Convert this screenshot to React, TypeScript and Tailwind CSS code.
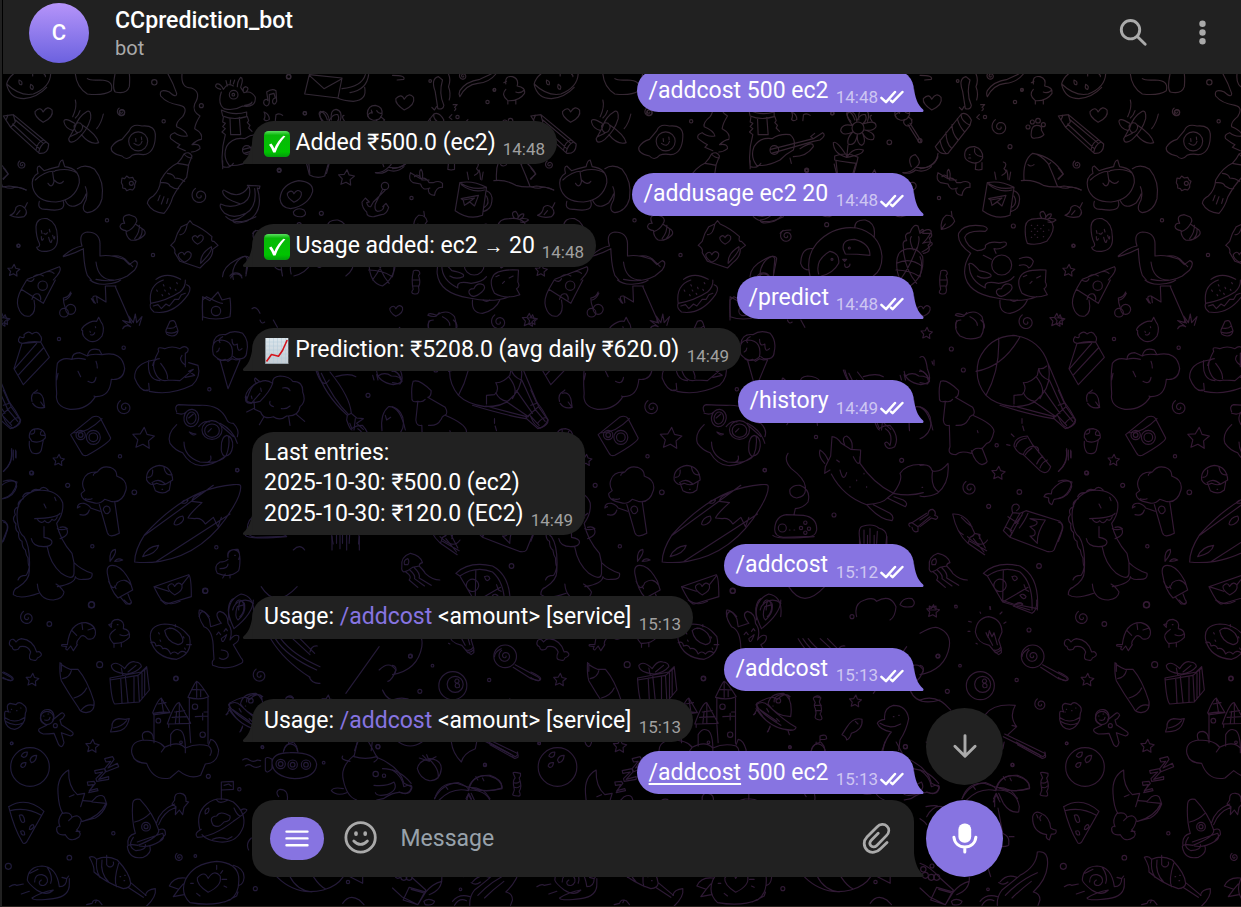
import type { ReactNode } from "react";

/* ---------- wallpaper doodles ---------- */

type Sheet = {
  x: number;
  y: number;
  paths: string[];
  dots?: [number, number, number][];
  stars?: [number, number, number][];
  spirals?: [number, number, number][];
  hearts?: [number, number, number][];
};

const sheets: Sheet[] = [
  {
    x: 0,
    y: 0,
    paths: [
      // watermelon, sleeping blob
      "M20 252Q24 235 40 222M20 252Q60 290 100 282Q150 262 152 222M20 254Q30 296 72 296Q112 292 140 262M57 240q12 4 8 14q-10 2 -8 -14M92 253q12 6 6 15q-10 0 -6 -15M98 222l0 6M132 222q6 6 4 8",
      "M226 222Q230 262 262 282Q310 288 334 272Q342 240 300 240Q270 242 262 236M345 222Q336 268 346 276Q380 284 388 260Q390 236 388 222",
      // pencil
      "M10 348L40 344L146 432Q146 462 118 460L32 382L10 348M10 348L24 346L18 360M40 344L46 366L32 382M46 360L130 430M38 372L118 446M130 420Q112 426 108 450M138 426Q120 434 116 458",
      // plane
      "M262 334Q274 330 272 356Q262 392 232 418Q208 436 206 416L224 384Q234 350 262 334M224 370Q190 350 192 366Q196 386 220 392M248 376Q290 404 296 428Q270 436 244 404M222 378q8-14 20-8q12 10 0 24q-16 12-20-16M226 300Q232 320 218 350M240 332Q236 346 226 354M310 342Q304 370 290 386M232 400l-22 10",
      // fried egg
      "M388 392Q396 370 426 378Q468 374 466 410Q464 460 430 464Q410 460 396 466Q380 484 366 468Q330 460 334 442Q344 424 366 418Q380 402 388 392M386 424a28 28 0 1 0 57 0a28 28 0 1 0 -57 0M407 416l1 8M424 411l1 8M402 430Q420 444 426 424",
      // steam squiggles
      "M504 222Q520 250 530 280Q530 296 508 276Q476 264 482 288Q500 310 540 316Q566 322 548 350Q526 368 530 380Q560 392 562 408Q540 412 524 398Q506 404 512 416Q530 430 540 434L532 442L556 452M546 222Q542 264 574 264Q606 276 584 312Q576 334 600 348Q586 370 584 386Q610 400 604 418Q590 420 576 434Q602 430 600 446Q588 456 574 456",
      // bottle
      "M552 462Q568 452 576 468L566 494L560 532Q534 560 518 592Q510 620 492 640Q456 638 442 610Q444 596 460 588Q480 570 482 540Q504 502 532 490Q546 476 552 462M552 462q10 12 24 12M532 490q14 2 34 6M502 520q20 2 22 14q16 0 30 10M484 548q22-2 26 10q14 10 26 8M480 586l-6 16M492 590l-8 22M504 596l-4 14",
      // llama with scarf
      "M662 268Q640 262 650 252Q662 250 670 268Q684 246 700 258M664 276Q652 310 672 326Q700 334 728 318Q768 324 766 292Q754 270 732 278L722 262Q732 234 722 232Q712 244 712 260M682 258l-4-16M690 254l2-14M700 252l4-12M688 284a13 13 0 1 0 26 0a13 13 0 1 0-26 0M696 284a4 4 0 1 0 8 0a4 4 0 1 0-8 0M664 330Q700 348 740 336L740 350Q700 362 668 348ZM690 354L692 404L722 404L718 352M670 352l-2 14l8 4l-8 10l8 6l-10 10l10 8q-14 50-8 96Q690 506 700 490M742 350l4 12l-4 6l8 8l-4 8l10 10M668 482v24M734 316q20-2 22-10M738 276q12-12 0-16q-10 2-8 12",
      // music notes
      "M800 318Q788 314 792 302Q800 294 804 302L800 276Q816 264 828 272L830 304Q824 318 818 308Q816 296 826 294L822 280L808 284L808 304Q808 316 800 318M792 336q6 10 0 22q6 8 16 0q0-16-16-22M826 362l2-18q10-6 20 2",
      // cat
      "M98 562Q92 532 114 520Q108 500 118 498L132 512Q150 506 176 500Q180 480 188 480L194 500Q240 506 238 548Q226 600 168 606Q110 606 98 562M232 506Q256 490 284 508Q314 544 306 596Q296 634 262 638Q240 632 258 600Q264 576 256 560M118 604Q110 630 140 628Q200 638 190 604M196 602Q210 632 244 608Q256 590 258 582M106 540q30-28 58-26M166 512q40-10 66 8M144 550Q156 568 162 544Q158 520 158 516M162 540Q180 558 190 544",
      // bee, acorn
      "M366 534l8 2l6-8l8 6l10-2l4 8l6 4l-4 10l0 8l-6 8l-8-2l-10 4l-4-6l-8-2l0-8l-4-8ZM388 550a6 6 0 1 0 12 0a6 6 0 1 0-12 0",
      "M360 680Q362 668 374 670Q364 650 378 646L388 644L404 650Q416 660 406 672L432 690Q440 700 430 708Q412 724 392 720Q378 710 378 692Q362 690 360 680M380 694Q396 690 406 672M404 716Q420 694 418 676M416 716q12-12 10-28",
      // bananas
      "M668 574Q670 566 678 574Q720 600 746 560L742 556L780 558L778 566L772 564Q794 636 740 664Q700 676 698 660Q720 658 738 640Q700 658 674 640Q656 622 662 612Q690 626 722 612Q668 596 668 574M748 562Q756 600 722 612M764 566Q772 620 738 640",
      // egg with heart, stone
      "M840 596Q844 552 896 542Q940 546 938 574Q926 616 872 626Q842 624 840 596M880 636Q890 620 912 630Q924 644 906 650Q880 652 880 636",
      // cake edge, leaf, ghost
      "M10 504L24 522L10 538M10 560Q34 568 44 562Q64 560 78 570M30 646Q46 640 48 622Q60 610 74 624L82 608M74 624Q86 638 72 650Q48 656 30 646M60 632L50 644",
      "M108 680Q110 652 142 656Q172 668 172 710Q176 750 140 754Q114 756 110 742Q122 740 118 730Q108 710 108 680M124 692l2 8M148 688l2 8M132 700q6 6 10-2M124 710q0 18 6 6M146 712q6 26 10 8M158 706q6 20 6 4",
      // pillow
      "M562 672L570 662L578 672Q610 686 636 710Q632 726 642 724L654 736L638 748Q640 770 616 788L600 804Q570 794 540 784L524 758Q528 746 512 736Q518 730 524 724Q530 700 544 680ZM562 672Q556 706 540 704M602 790Q600 760 634 740Q640 752 602 790",
      // goose
      "M190 768Q220 742 246 738M190 770Q224 760 250 746M246 738Q234 700 262 696Q298 696 300 730L300 768Q330 762 372 778L388 794L404 782Q420 786 404 810L382 828Q340 850 288 838M250 746Q252 800 262 826L274 840M288 786Q294 840 340 840M334 768Q366 764 382 784L398 800",
      // pizza tip, burger top
      "M82 838L178 800Q186 808 172 826L160 840M100 830q16-12 30-2M132 818q20-8 30 2M468 838Q500 814 542 838M700 838Q692 810 712 784Q738 758 742 778L738 820M692 834a18 18 0 0 1 34 0",
      "M758 700Q760 690 790 690",
    ],
    dots: [
      [463, 247, 8], [604, 317, 6], [491, 364, 5], [866, 230, 7], [914, 340, 5],
      [321, 661, 5], [56, 737, 4], [459, 765, 5], [838, 512, 5],
    ],
    stars: [[41, 812, 19]],
    spirals: [[365, 336, 14], [66, 494, 13], [600, 587, 26]],
    hearts: [[132, 344, 27], [594, 718, 17], [555, 770, 20], [884, 588, 22]],
  },
  {
    x: 250,
    y: 70,
    paths: [
      // envelope, hat brim
      "M178 14L164 72L264 84L276 24ZM178 16L222 56L276 26M346 14Q336 50 276 56M356 14Q350 60 300 68M344 52Q352 90 310 94Q280 92 262 84",
      // blossoms and pot
      "M220 154Q200 130 212 124Q226 128 232 150M244 150Q240 120 258 118Q280 122 270 154M284 154q-12-16-2-18M170 282L178 314Q200 328 224 318L234 284",
      // lollipop
      "M352 130Q354 106 376 106Q400 110 396 134Q388 154 368 150Q352 146 352 130M364 120l2 10M380 122q6 10 14 8M392 140l12 10",
      // anchor
      "M394 348a11 11 0 1 0 22 0a11 11 0 1 0-22 0M398 358L376 402Q372 420 382 424Q400 424 402 408L398 410L408 400L416 412Q410 434 394 434L372 440Q350 442 350 426Q336 414 336 396L346 384L358 396L350 398Q354 412 362 410L370 396L408 358M376 308Q400 314 414 300Q440 310 462 290",
    ],
    dots: [[165, 130, 5], [116, 20, 6], [87, 301, 5], [214, 430, 6], [733, 60, 4]],
    stars: [[289, 324, 25]],
  },
  {
    x: 0,
    y: 280,
    paths: [
      "M80 0L64 28L130 70L166 0M64 28Q48 58 54 80Q64 114 90 108Q110 98 102 60M96 58q4-20 20-16q8 8 6 18M80 0q16 10 22-4",
      "M212 36q-6 16-22 18q0 16 6 30M214 40q-8 18-20 20",
      "M270 0Q290 16 320 12Q350 10 362 0M316 18L318 66L288 48Q270 46 286 70M290 50l2 18M274 56l8 12M346 20L394 130M318 18h30M368 146q8-14 24-6l-24-18l22 6l-4-20l14 20l6-26l4 26l16-18l-8 26",
      "M452 70Q444 16 490 0M556 0Q558 20 540 36Q500 62 452 70M452 70Q446 84 462 96Q520 106 564 44Q578 20 560 14M460 78l14-4l10 12l14-14l10 6l16-20l12 0l8-14l12-4M470 30l2 4M490 14l2 4M510 22l2 4M486 44l2 3M506 40l2 3M526 28l2 3M530 8l2 3M494 30l2 3",
      "M608 110Q606 80 608 50L630 62L654 36L666 60L690 54Q694 86 690 110Q646 124 608 110",
      "M248 152Q240 150 252 138Q274 120 290 124L296 112L302 124Q316 140 306 168Q288 192 266 182Q244 170 248 152M270 154l1 3M286 140l1 3M272 164q8 4 12-6",
      "M498 150L510 124Q522 118 526 128L534 152Q532 168 516 168Q494 166 498 150M500 144q20 4 28-6M498 156q20 8 34-2",
      "M66 190Q48 186 60 170Q76 178 72 164Q86 150 96 162Q112 150 120 166Q128 174 122 186M66 190L42 266L70 314L148 232L122 186ZM44 266L110 190M56 284L130 204M68 190q26-8 54-4",
      "M172 250Q186 230 216 238Q216 218 240 218L262 228Q268 200 298 210L306 224Q368 212 374 266Q370 302 334 298Q330 352 286 350Q262 390 210 388Q164 380 170 340Q166 290 172 250M216 238q18-6 40 0M262 228q12-8 44-4M170 300l4-20M234 274l8 16M288 244q4 10 4 20M264 304Q284 316 288 292M286 350l-4-2",
      "M476 214Q470 200 486 204L494 206Q516 196 540 206Q554 194 564 206Q566 216 556 220L556 260M476 214Q456 250 462 268Q474 310 506 300M462 240Q402 250 404 294Q420 336 444 332M446 242Q440 300 480 302M446 310L448 330L438 330M448 334Q510 348 576 316Q604 290 594 256L566 248M546 226Q534 240 556 256M482 250Q506 280 502 296M506 300L540 302L580 268L566 274L584 286L556 292M478 236q-16 0-20 20",
      "M640 224Q630 180 664 180Q704 184 696 230Q670 256 640 224M640 192Q644 160 676 164Q700 148 728 160Q748 182 740 216Q740 240 708 236L700 230M660 240L684 326L720 240M652 236l10 6l14-4l8 6l12-8l12 4l12-2M668 170q-16 8-8 18M696 178q0 24 16 14q0 28 14 14M650 216q8-4 8-12",
      "M96 364Q90 342 108 334L112 330M98 370Q110 388 134 382L130 356Q124 334 104 340M122 366l10 14",
      "M10 330L28 370L10 376M10 410Q20 438 38 444Q62 436 62 420Q46 388 28 366M30 430q16-20 28-16",
      "M212 464L276 412Q294 404 302 416L332 474Q332 486 262 526Q250 530 244 518L212 464M222 458q40 2 84-42",
      "M88 472Q86 446 114 446Q138 450 136 474Q120 492 96 484ZM88 484Q86 506 96 518Q118 526 124 510L130 480M104 448q2 16-12 14M124 454q-10 14 10 12",
      "M530 396Q522 378 536 374Q566 376 598 376Q660 372 680 418Q684 430 700 430Q720 450 712 470M530 400q20 6 28-4M552 412a22 26 10 1 0 44 4a22 26 10 1 0-44-4M560 412a14 18 10 1 0 28 4a14 18 10 1 0-28-4M606 450a30 28 0 1 0 60 0a30 28 0 1 0-60 0M614 452a22 20 0 1 0 44 0a22 20 0 1 0-44 0M596 440q16-20 32-14M660 430Q700 450 712 490M664 438Q690 460 700 470M530 434Q500 462 510 490Q524 510 548 518Q590 590 678 528Q690 500 686 470M552 486Q552 530 600 546Q660 552 678 528M568 456q12 6 20 6q-10 8-20-6M624 546q12-4 8-18M664 500Q664 470 680 466Q700 470 698 500Q694 530 672 528Q662 520 664 500M566 414l14-12M624 456l10-10",
      "M254 632Q244 616 250 600Q258 574 292 576Q306 556 330 562Q352 570 350 588Q384 600 378 630Q366 672 332 664L314 658Q300 674 280 668Q240 660 244 640L254 632M256 656q12 4 20 0M292 576q-12 4-12 10M298 674L322 758Q328 776 358 760L344 664M310 690q0-10 10-12q12 2 10 16q-6 10-14 6ZM300 694l-28-10Q268 676 252 670Q232 668 232 684Q238 680 240 680M240 704Q262 710 268 690",
      "M440 600Q436 564 478 556Q516 560 518 600L508 606M440 600Q450 620 470 610Q490 620 508 606M458 610L466 632Q490 646 508 630L512 606M458 570Q460 592 444 592M492 562Q496 588 516 584M456 608q20-16 40 4M486 628h2",
      // surfboard
      "M722 618Q722 612 700 614Q560 624 434 764Q404 810 404 846Q440 850 480 844Q620 820 700 680Q724 640 722 618M434 766L640 616M470 844L690 702M604 640Q576 650 576 664L606 668Q570 700 564 714L584 716Q604 712 616 732L640 712L654 740L664 712M544 668q8-10 20-8q-4 14-20 8M522 732q4-20 26-24q8 14-10 24q-12 6-16 0M428 830Q440 800 476 796Q470 820 428 830",
      // dinosaur
      "M52 720Q44 654 104 632Q170 624 188 668Q192 700 170 730Q180 780 216 820L222 848Q244 870 276 880Q280 900 250 898Q230 900 226 890Q226 910 172 920M88 870Q92 800 72 770Q56 760 52 720M88 870Q90 900 54 922Q40 926 40 944Q60 960 116 940M112 912Q116 960 160 960Q190 956 192 936Q180 918 168 912M104 716Q170 714 180 700M112 718q12 16 22 4q12 14 22-4q10 8 16-8M132 740L132 772Q156 776 156 786Q156 800 130 800Q98 800 94 776M142 802Q150 850 184 880Q220 904 222 880L222 848M172 746Q184 752 200 746Q210 766 180 776M132 672l6 12M164 652l4 10M70 656q-20 8-14 24q-18 6-10 24q-12 14 2 28q-4 18 8 26q-2 20 10 26q0 20 10 26q2 16 8 24q0 22 4 26q-4 20-10 26q-20 0-24 14M68 650q6-14 24-12q8-14 26-8q12-16 26 0M202 746q-8-8-22-4",
      "M10 604Q50 592 50 620Q42 650 10 656M10 726Q28 730 22 750Q16 770 10 784",
      "M322 880Q318 850 348 858Q370 866 390 904L398 930L354 954Q330 930 322 880M326 904Q340 940 352 908Q376 890 394 916M362 952L378 972Q402 972 390 958L384 942M344 918l4 8M330 842Q328 810 346 808Q350 820 330 844M344 844Q352 832 368 840Q360 844 344 844",
      "M462 920L566 884Q574 890 574 950L500 972Q488 974 462 920M462 920L506 934M568 886L546 914",
      "M684 832Q678 806 714 808M714 808Q720 820 720 836Q720 860 716 872Q690 896 652 880Q640 858 660 846Q676 846 684 838M684 832a18 18 0 1 1 32 6M676 882l-8 12M690 884v10M660 866q24 0 24-14M704 826h2",
      "M40 510v30M48 514v20M10 574Q40 548 34 510M698 990a38 38 0 0 1 62-20M716 990q0-26 8-28q10 8 8 28M756 86Q770 76 780 100M740 360q16-50 30-50l10-6M740 350q-10 20 14 20l26-30",
    ],
    dots: [
      [128, 17, 14], [192, 98, 13], [212, 88, 15], [648, 93, 14], [177, 177, 5], [371, 203, 5], [628, 328, 5],
      [242, 465, 14], [242, 465, 7], [280, 472, 21], [280, 472, 13], [360, 529, 5], [95, 579, 6], [203, 616, 6],
      [403, 637, 7], [712, 571, 5], [277, 799, 5], [649, 802, 5], [616, 933, 7], [275, 974, 9],
    ],
    stars: [[14, 120, 16], [430, 476, 34], [176, 541, 18]],
    spirals: [[374, 382, 24]],
    hearts: [[526, 926, 22]],
  },
  {
    x: 0,
    y: 600,
    paths: [
      "M48 126Q40 112 30 122Q24 136 36 140Q38 154 54 148L60 140Q84 136 92 156Q82 180 98 180Q110 184 112 174Q126 168 124 162Q120 152 110 156Q100 120 64 116Q54 118 48 126",
      "M202 134Q210 66 258 68Q290 76 286 104Q280 122 262 116Q248 100 240 112Q230 122 230 132M202 134Q180 132 186 138L200 140Q194 148 202 150L212 138L220 152L232 134M216 92l14 14M246 72l2 16M282 84l-18 6",
      "M334 82Q330 58 354 58Q376 64 370 86Q392 90 388 112Q370 132 340 130Q320 110 336 96L346 88M334 82L326 74L336 70M342 132v10M364 130v10M388 100Q376 112 360 104M352 74h2",
      "M452 120Q444 76 494 72Q540 72 568 110Q580 160 530 178Q466 174 452 120M494 92Q512 74 540 100Q560 130 534 134Q500 126 494 92M452 128q14-6 16 10q16-6 20 8q16-4 24 16q10-12 22 0q10-14 24-4M560 134h14M526 80v-6M476 98l2 4M480 120l2 4M550 110l2 4M508 84l2 2M554 144l2 4",
      "M640 148Q640 90 612 80Q592 50 598 30Q612 28 628 56L632 80L664 70Q640 40 660 34Q684 40 684 70Q700 90 690 120Q704 100 716 108Q720 124 700 134L722 172Q734 184 724 190Q680 214 638 196Q634 184 642 178L640 148M650 104l6-8l6 8M672 94l6-8l4 6M664 116q4 22 16-12Z M664 150q24 0 20 20q-10 14-26 4M702 86Q680 40 686 20Q690 0 700 -4M702 86Q760 40 760 0M712 20q-10 30 2 40q24-20 20-46Z",
      "M180 188Q184 196 210 208L234 208Q262 240 282 304Q286 336 258 338Q240 336 236 324Q206 280 184 242Q178 220 180 188M188 236Q210 232 214 212M222 294Q250 286 260 264M244 330q16-20 38-14M184 190v24",
      "M380 222Q334 218 334 196Q348 180 374 206Q390 180 406 186Q424 188 424 200Q410 218 380 222M330 234L424 216L440 200L448 270L418 306L344 312Q334 300 330 234M330 240L414 226L440 204M362 234L366 310M376 230L384 308M402 230V306M414 226L418 304M426 220v76M434 210v74M364 204l4 20M408 196l-24 20",
      "M14 340Q14 330 26 336Q16 314 30 310L48 314Q56 302 70 314Q84 322 76 340L74 360Q64 384 44 388Q18 386 14 358ZM14 352Q44 374 74 352M16 364q28 18 54 4M34 328h1M50 332h1M62 324h1M30 336h1",
      "M122 352A20 20 0 1 1 158 360L180 342Q190 334 194 346Q190 356 180 360L184 374L214 394Q226 402 212 408L184 398L192 428Q186 448 176 434L162 400Q148 402 130 402Q110 394 118 386L140 376L132 370Q122 364 122 352M130 348h2M144 342h2M134 360q14 4 16-8",
      "M462 428V346L458 338Q474 298 484 294L510 338Q492 334 460 340M464 344L508 338M484 296L490 334M474 312l24-4M502 372Q524 308 538 308L572 370L502 372M524 336l30-4M538 310v60M516 352l46-2M530 334l-4 36M506 372v10M568 372L572 428M564 292Q586 244 590 244Q600 248 626 290Q600 302 564 292M568 296V370M624 294V430M590 246v46M576 268l36 2M602 270v20M608 340v20M586 350l38-2M612 336h12M512 438V404Q524 384 538 390Q554 394 556 440",
      "M430 420Q420 394 444 394Q460 398 460 416M430 420Q388 426 396 462Q404 490 440 490Q460 544 510 534L536 512Q570 540 602 526L616 492Q654 490 656 450Q648 420 632 418L626 434M430 420Q480 420 494 442L484 456M494 442Q534 420 556 444L556 458M556 444Q590 428 626 438Q640 450 630 466",
      "M332 394L336 382Q334 360 356 356L376 358L388 356L384 368Q376 392 350 394L332 396M340 384Q366 380 380 362",
      "M64 468q4-12 18-12q0 16-12 16ZM90 480q4-14 20-14q-2 20-16 22ZM62 498q2-12 16-10q-2 16-12 14Z",
      "M206 510Q170 530 174 580Q176 620 188 640M206 510Q204 560 232 584L254 580L248 600L242 620M208 590l14-6M186 640Q212 634 216 652Q236 640 244 660Q240 680 230 690Q248 700 236 712Q210 730 196 704Q168 708 170 684Q176 676 180 680Q170 660 186 640M216 652l-10 10M240 694h-12M250 602L276 604L290 590Q312 580 316 600L320 612Q310 640 286 654L246 664M248 664Q300 650 318 610L276 606",
      "M262 546L282 544L286 550L268 572L292 566L294 572L266 578L280 554L264 556ZM284 512L314 506L318 514L296 538L326 530L326 538L290 544L288 536L308 516L286 520ZM314 476L338 470L342 478L324 504L352 490L356 500L316 516L314 506L332 484L318 486Z",
      "M26 620Q80 588 132 634L80 726Q70 736 66 724Q44 690 26 620M30 632Q80 620 124 646M58 646q14-6 16 18q-10 12-16-18M90 680q10-12 12 0q-8 12-14 8ZM62 694q12-6 12 10q-10 4-12-10",
      "M398 610Q400 594 420 598Q460 640 476 690Q480 710 414 736M398 610Q394 660 406 700M404 666Q430 660 450 640M412 726L488 700Q496 716 480 724Q448 744 418 738M414 736Q384 730 382 740Q388 780 430 772Q456 760 450 740M406 700Q380 706 384 736M400 712Q380 740 408 752Q440 750 436 734M476 690Q498 680 496 704L480 722M470 668Q480 630 524 612M476 674Q490 636 528 622M524 600Q522 578 542 580Q560 582 558 604L566 606L552 622L548 644L538 630L526 644L528 620L516 612Z",
      "M600 690Q586 640 620 612Q656 584 700 606Q740 640 730 680Q712 730 660 726Q620 722 606 704M664 598V546L700 544V568L666 570M672 556l14-4l8 6M616 642q-4-14 10-18q4 14-10 18M640 676Q624 650 650 648Q660 630 690 648Q694 664 672 666Q656 686 640 676M604 688Q580 700 592 712Q640 710 700 664Q750 630 738 628Q728 624 722 632M702 624Q712 648 722 648M650 600q8 14 34 0M638 718q20-10 44 0l14-8",
      "M28 860Q44 850 50 856L70 852M64 882l24-8M82 840Q84 800 126 798Q170 800 178 860Q200 860 200 836L186 832M200 836L206 828M96 894Q124 876 160 870Q140 890 110 870Q84 850 82 840M96 894Q100 904 160 896Q210 890 208 850L208 836M104 846Q104 822 126 824Q146 830 142 846Q134 862 120 854Q114 846 124 840M142 802Q160 830 152 850M90 820l24-12",
      "M268 772Q280 766 290 778Q320 764 352 780Q390 820 392 850Q390 864 370 866Q320 850 282 816Q284 800 268 772M290 778Q286 810 300 832M306 780Q300 820 326 846M340 786a10 10 0 1 1-20 8M356 790Q340 840 350 860M320 766V794M392 848L438 886M384 862L430 892M436 886Q440 868 466 866Q470 890 440 918M360 830h2M372 842h2M374 826h2",
      "M260 914l16-4q4-14 20-8l10 12M290 900l-4 8",
      "M556 840Q580 790 650 784Q710 788 716 830Q720 880 690 900Q640 920 570 908Q540 880 556 840M700 796Q734 806 732 834Q730 852 718 856M556 834Q520 830 508 858L536 868M536 868L520 890L552 884M674 906L710 888L714 876M536 868l14-16M650 796v12M668 812l-6 8M680 838h-14M672 858l8 4M590 880l10 8M580 850h-8",
      "M812 116Q850 180 930 232M826 116Q860 170 950 210M842 116Q880 166 960 200M878 116L930 164M930 156q4-20 22-18M928 232Q936 252 960 250M900 116l44 44",
      "M688 310Q740 280 748 300Q770 274 788 290M688 310Q684 330 760 376M688 322L748 364M736 318h1M684 340l-6 4M728 378l-6 16M740 306q-2-14 14-20q30-10 32 12M862 290q12-6 18 4",
      "M816 490Q816 458 870 458Q946 456 950 494Q946 534 884 536Q820 530 816 490M850 456Q854 430 872 432Q890 434 894 456M866 432v-6M796 476Q800 468 816 478V506Q800 524 796 510ZM728 480q12-8 20 0q12 8 24 0l10 2M736 498q12-8 20 0q12 8 26 0M836 590Q824 574 840 568Q866 568 862 600",
      "M482 0Q510 20 540 4M372 0Q390 20 394 8M10 216q36 16 28 24q-10 6-28-8M746 750q-10-20 8-36",
    ],
    dots: [
      [274, 15, 9], [148, 72, 7], [299, 194, 9], [528, 235, 7], [35, 430, 4], [90, 501, 58], [438, 680, 13], [438, 680, 6],
      [141, 354, 20], [166, 377, 6], [475, 362, 7], [585, 320, 8], [608, 404, 8], [543, 427, 4], [625, 529, 6], [718, 568, 5],
      [340, 700, 5], [25, 799, 9], [208, 773, 7], [586, 768, 4], [766, 866, 6], [787, 441, 4], [842, 492, 14], [842, 492, 7],
      [878, 494, 14], [878, 494, 7], [918, 494, 14], [918, 494, 7],
    ],
    stars: [[97, 240, 20], [277, 439, 21]],
    spirals: [[82, 53, 22], [780, 226, 22], [538, 771, 13]],
    hearts: [[628, 846, 36]],
  },
  {
    x: 392.5,
    y: 0,
    paths: [
      // party popper
      "M124 342Q140 334 154 360L150 376L84 460Q60 466 46 440ZM124 342Q120 360 150 376M112 356Q118 380 134 396M96 374Q96 400 114 420M78 396Q78 430 94 444M60 420Q64 446 78 460M54 460Q50 500 0 506M138 230Q114 236 128 274Q132 300 136 326Q152 330 154 316Q138 280 150 240ZM168 222Q176 240 168 260Q176 280 170 300M202 290Q220 254 256 250Q290 248 310 222M202 272Q220 244 262 238L296 222M202 290q-4-10 0-18M182 314h12l-8 8q8 4 0 10M178 344l-8 8l8 6M118 322l8 8l6-10M0 226q40 0 34 12l-20 2",
      // duck, paw
      "M340 252Q336 226 360 230Q380 236 374 258Q400 262 396 280Q380 304 346 302Q324 284 340 268M334 248l8-4M346 304v8M370 302v10M396 270q-14 12-26 6",
      "M334 396Q336 376 350 376Q368 376 364 390L372 404Q364 414 346 414Q330 418 334 396",
      // lollipop, bow, mug
      "M134 466Q134 438 164 440Q190 448 188 474Q176 494 156 488Q134 482 134 466M164 446q-4 20 20 24M168 488L166 508L176 510L186 508V488M148 464h2M146 474h6",
      "M84 536Q78 512 86 508Q94 520 88 540M84 536L54 518Q46 540 62 548L84 552M84 536Q100 530 110 548L122 548Q140 540 150 550L150 562Q130 560 126 586Q104 584 108 566M84 552Q90 574 112 564M90 540l20 0M66 530q6-10 16 0",
      "M202 548Q240 540 282 562L270 646Q230 662 188 632ZM202 548Q240 572 282 562M206 554Q240 580 276 570M282 572Q302 580 298 604Q296 628 274 634M282 588Q294 610 276 622M206 596L258 586L246 618L232 606L216 616L212 600ZM212 600L246 594L222 612M224 516l4 22M250 486q14 4 2 20q14 10-6 20M260 510q4 12 4 28M272 516l-4 24",
      // cake slice
      "M312 540Q308 480 338 460Q360 462 384 490Q400 526 412 558M338 460Q400 470 430 522L414 536M304 542Q340 538 370 556Q400 564 432 558Q460 560 484 570M324 494q8 8 18 0M386 494l6-6",
      "M64 688Q60 660 78 646Q100 644 104 664Q92 686 64 688L76 672M94 634l2 14",
      // strawberry
      "M316 680Q318 656 350 656Q380 652 396 668Q408 690 380 724Q350 738 322 730Q314 710 316 680M366 656Q352 636 370 634Q380 646 376 654Q384 640 394 642Q394 652 384 656Q404 654 408 660Q396 670 384 666M334 676h1M352 676h1M370 676h1M334 694h1M352 694h1M370 694h1M386 690h1M334 712h1M352 712h1M370 710h1M344 686h1M362 686h1M344 704h1",
      // tumbling cat
      "M152 760Q110 730 116 700Q130 670 190 678Q210 684 196 694Q140 690 134 712Q140 740 172 752Q200 750 196 736Q210 722 240 728Q264 722 258 736Q240 750 222 746L228 760M152 760Q132 790 134 820Q140 880 230 894Q300 910 350 890M146 794Q150 780 178 812Q220 820 212 830Q190 840 172 828M148 794Q146 840 196 864M196 864Q190 840 236 850Q270 846 282 830M300 832Q310 806 378 810L376 846Q384 860 372 866L382 884Q340 900 306 880Q290 850 300 832M298 776Q330 764 340 784Q336 800 326 804Q320 790 298 796M310 830l10-4M350 834l12-6M330 850l6-6M244 866q10-20 28-12q10 10-4 22Q240 900 230 880q-4-14 14-14M190 766l24 12",
      "M62 818Q60 808 78 812Q86 820 78 826Q86 850 78 860Q84 884 66 882Q52 880 62 868Q56 840 62 818M62 840h20M60 858h20",
      "M0 694Q14 680 8 700L34 700Q38 710 28 714Q36 730 24 736Q36 756 10 760M0 770Q10 790 0 830",
    ],
    dots: [
      [195, 351, 5], [285, 306, 5], [306, 269, 4], [113, 243, 4], [0, 422, 6], [270, 440, 6], [280, 678, 6], [57, 594, 5],
      [460, 737, 5], [245, 795, 30], [324, 381, 6], [337, 366, 6], [354, 362, 7], [370, 374, 6],
    ],
    spirals: [[240, 381, 26], [212, 228, 12]],
    hearts: [[38, 306, 28]],
  },
  {
    x: 392.5,
    y: 300,
    paths: [
      "M110 62Q100 90 120 108Q150 124 182 110Q198 86 186 50Q164 24 132 46Q108 36 106 46Q120 52 132 48L140 38M150 50Q172 60 172 76",
      "M240 0Q236 40 270 40Q310 30 322 0M272 0q10 8 20 0",
      // balloon
      "M198 286Q160 240 176 180Q206 110 280 106Q360 116 384 190Q400 260 350 300Q330 320 278 320Q224 312 198 286M236 114Q240 210 198 286M300 110Q250 200 168 214M380 198Q370 208 356 206L352 226Q330 250 310 248Q322 270 306 284L282 286L282 312M356 206Q360 230 386 240M350 232Q380 270 360 296M310 278Q320 300 344 304M384 190L438 318M388 240L428 328M372 272L420 340M340 304L408 350M280 318L402 350M240 316Q330 344 400 356M400 354L438 320L466 360Q458 382 436 386ZM412 346L440 376M426 326L458 364",
      // tree
      "M62 244Q80 236 116 272Q116 290 106 292L158 322Q168 340 158 346Q220 372 222 394Q214 430 200 430L186 446Q160 440 154 460Q120 450 108 464Q80 464 90 440L88 376Q72 380 70 360L76 304Q56 310 58 290Q56 260 62 244M76 304q14 4 22-6M108 376q28 2 36-16M156 346q-8 4-10 12M172 392l2 6M154 452Q166 490 186 494Q206 488 200 480L186 444",
      "M0 172Q16 160 22 206Q36 240 22 252L0 248M0 210Q24 220 24 240M36 184l2 8M42 180l0 16M0 320a46 50 0 0 1 0 96",
      // flashlight
      "M282 438Q284 410 322 408L340 438Q316 442 310 464Q292 460 282 438M288 440Q292 418 320 414M310 464L360 512Q382 528 392 500L340 436M336 444Q320 456 316 464M360 504Q366 486 382 480M350 492Q354 480 368 468M338 440q20-4 18 18M306 356v14M308 378l4 14M274 402l8 8M260 434l10 2",
      "M440 446Q446 490 416 514M452 450v22",
      // fox tail, bone, squid
      "M0 496Q30 490 36 512Q60 520 84 490Q90 550 52 580Q20 594 0 588M38 512Q30 560 56 576M6 562h2M0 660L24 644Q24 628 38 628Q50 636 44 646Q60 650 48 658L34 654L0 680",
      "M98 642Q130 640 150 670L164 700Q160 710 150 712L144 730Q110 700 98 642M124 652Q140 670 156 680M114 690q6 10 16 14M144 730L194 764M150 724L200 752M164 700L180 704L178 716M176 706L196 744M160 716L192 756",
      // jellyfish
      "M28 800Q24 770 54 760Q84 766 90 788Q80 790 80 798L60 802Q48 812 34 816Q26 812 28 800M36 794q-4-14 10-18q6 8 0 18ZM40 816Q60 830 50 840L76 862M52 810Q70 826 66 836L96 858M66 804Q84 820 80 834L116 856M80 798Q96 814 98 820Q120 840 142 840",
      // chocolate
      "M318 632L420 664Q430 672 426 690L402 750Q396 758 380 754L270 712L310 636M318 632L300 640L270 692Q280 700 268 710L250 692L278 638L300 640M278 638Q270 612 290 612Q306 620 290 632M330 656L376 660Q350 700 352 730L330 708Q350 710 344 692L330 680Q356 676 350 664ZM324 640q-8 20-26 44M264 650l30 20M256 680l20 12M306 646l-20 24",
      "M456 546Q426 534 396 570L394 582Q376 578 372 590L386 594Q384 610 396 614L402 598Q446 594 456 546",
      // pizza half
      "M190 820Q230 782 300 798Q360 830 352 930M202 828Q250 796 300 816Q340 850 336 930M190 820L202 828L248 906L330 930M250 810L248 906L324 862M222 852a18 18 0 1 1 36 8a18 18 0 1 1-36-8M282 918q10-14 26-4M276 830q14-6 16 6q-10 14-16-6M300 886q10-8 18 4q-6 14-18-4M312 854l6 16l8 4",
      "M28 918q8 8 20 0v12H28ZM210 920l2 8M104 916h6",
    ],
    dots: [
      [94, 147, 6], [130, 210, 6], [230, 436, 5], [298, 576, 7], [206, 619, 6], [357, 798, 7], [499, 518, 5],
    ],
    stars: [[20, 100, 18], [409, 61, 21], [235, 520, 21]],
    spirals: [[320, 66, 25], [150, 564, 23]],
    hearts: [[12, 32, 20]],
  },
  {
    x: 392.5,
    y: 600,
    paths: [
      // bulb
      "M208 136Q172 130 166 96Q170 54 206 50Q244 56 246 96L236 120L244 146M208 136L226 158M222 150q12 4 20-8M226 156q8 4 18-8l0 10l-8 6ZM218 136L198 98L204 112L208 92L216 110L222 98L232 134M180 36l2 4M210 20v8M246 36l-6 6M146 64l8 2M258 66l-6 4M144 94h6M168 130l4 2",
      "M244 0L280 12L352 26M350 0Q352 30 336 40L280 18M288 12q10-8 20 0",
      "M368 194L438 232Q446 240 438 242L416 236L362 202M306 170q0-14 20-24M326 168",
      "M0 100Q40 76 56 84Q94 100 88 140Q76 210 0 224M0 196Q16 200 8 218",
      // umbrella
      "M0 300Q50 280 92 330M196 344Q220 310 286 316Q266 350 290 380L264 404M276 376l14 4M254 402L366 456Q380 460 376 472Q364 480 360 468M250 410L358 464",
      // palm
      "M126 596Q150 550 198 548Q230 560 228 572Q240 520 290 528Q330 540 328 564Q280 580 238 564M228 572Q180 560 140 600M232 570Q290 570 298 620L296 636Q270 640 250 610L236 580M228 584L220 606M228 584L240 606M224 590V620M234 624L248 700Q270 710 266 730Q270 740 246 740M268 710h14M250 530l6 10M270 534l4 8M160 560l6 8",
      "M362 520Q360 514 384 520Q386 528 380 534Q390 560 380 574Q388 590 376 588Q356 588 362 580Q368 570 364 560Q360 540 368 534ZM364 548q10 4 18-4M366 562q10 4 16-4",
      "M338 650Q342 632 360 638Q390 650 392 684Q400 690 408 690Q412 704 394 702L388 720Q376 716 380 704Q336 696 338 650M350 644l4 10M364 646q-8 6-2 16",
      "M18 620q30-6 38 0M0 510Q30 530 34 560Q60 550 58 564Q50 590 20 576M0 656q16 10 20 18M20 650Q40 614 66 620",
      // crocodile
      "M352 756Q388 750 382 800Q378 840 340 876Q360 880 360 900L354 916M352 756Q350 800 300 826Q280 844 246 870Q230 890 232 916M352 818Q300 840 256 886M334 844Q300 870 276 894M240 846Q260 820 290 832M180 904Q200 880 232 890M186 916q14-24 36-14M236 848q14 10 28-2",
      // boxes
      "M0 790Q30 800 60 834L100 870L76 914L28 890L0 864M50 862L100 876L76 914L32 900ZM56 868L92 878M148 832Q150 870 110 884M96 880Q120 850 148 844M94 904q14-12 32 0q-4 14-28 10Z",
      "M190 238q8-4 10 6q-4 8-10 4q-6-4 0-10M192 250q12 0 8 12q-10 4-12-4q0-6 4-8M204 804l8 26",
    ],
    dots: [
      [108, 20, 4], [327, 90, 6], [120, 197, 4], [53, 169, 5], [290, 240, 5], [82, 274, 6], [181, 257, 42], [188, 253, 24],
      [338, 169, 34], [440, 430, 4], [277, 494, 4], [10, 808, 8], [16, 826, 9], [34, 832, 9], [50, 832, 9], [204, 868, 4], [36, 798, 6],
    ],
    stars: [[39, 34, 20]],
    spirals: [[338, 168, 20], [362, 313, 19]],
  },
  {
    x: 72.5,
    y: 70,
    paths: [
      // guitar and flower pot
      "M462 230Q480 200 516 206Q540 190 570 194Q590 210 580 240Q560 250 540 270Q500 290 470 286Q450 260 462 230M512 238L640 206L668 188Q680 196 660 210L640 214L514 250M640 206L632 200L644 190M600 236Q640 210 640 230Q620 260 580 260M570 264l4 16M510 240a13 13 0 1 0 26 0a13 13 0 1 0-26 0",
      "M756 174a18 18 0 1 0 36 0a18 18 0 1 0-36 0M756 164Q730 130 752 124Q770 130 770 154Q780 130 796 134Q804 148 788 162Q830 148 828 170Q820 184 794 180Q830 190 820 208Q800 214 788 190Q800 220 786 226Q770 222 772 194Q766 230 744 222Q740 204 758 186Q730 200 722 182Q724 160 756 166M740 258Q710 210 700 218Q700 250 740 262Q760 230 790 240Q790 254 740 262L744 226M704 258Q740 244 774 262L770 280Q730 276 704 270ZM708 272L712 310M770 280L762 310",
      "M888 140Q880 134 900 126M914 148a12 12 0 1 0 20 2M930 160L964 214L958 218L924 164M934 290Q920 260 946 254Q968 276 950 290Q930 310 910 308M950 292Q1000 300 1014 260",
      // panda
      "M630 618Q616 560 650 520Q700 466 770 474Q840 490 846 560Q846 600 820 618M640 536Q604 530 602 580Q608 600 628 600M764 474Q764 448 796 450Q830 460 822 502M656 612Q644 570 690 544Q720 550 716 580Q700 610 664 618M730 538Q724 508 764 508Q810 520 810 556Q770 552 736 552ZM728 568h12l-6 6ZM734 582q0 12 8 10q8-2 8-10M804 600",
      // pineapple
      "M890 580Q890 548 910 540Q950 526 968 560Q974 620 930 648Q890 640 890 580M912 540Q904 510 920 512Q910 490 930 488Q940 460 954 468L960 490Q990 470 994 486Q980 510 968 520Q1000 510 996 524Q980 540 966 546M940 540Q926 510 934 500M950 540Q960 510 956 500M890 580Q930 560 968 590M888 600Q930 600 960 620M910 540Q916 600 950 640M950 534Q930 590 900 630",
      "M460 440Q490 470 550 440M450 620Q452 590 490 570Q526 550 530 566L520 618M472 618a22 22 0 0 1 36 0M390 690L402 680Q440 700 450 700M390 690V750",
    ],
    dots: [[868, 217, 7], [620, 300, 6], [680, 464, 6], [148, 128, 8], [696, 568, 3], [748, 534, 3]],
    spirals: [[560, 498, 20]],
  },
  {
    x: 240,
    y: 320,
    paths: [
      // sheep
      "M50 190Q40 180 46 174L60 186Q80 176 98 190Q90 214 60 244Q20 256 16 232Q20 206 50 190M98 190Q96 170 120 168Q150 170 158 184Q190 184 188 216Q200 244 180 260Q176 290 140 288Q120 304 100 290Q70 300 62 276L44 268L42 244M44 264L20 276M72 290L58 314M146 290l4 26M170 284l24 20M90 244q-4 12 10 16M128 204q16-4 22 8M124 266q16 2 26-8M34 228l2 8M62 204l2 10",
      // feather, bell
      "M232 150Q250 220 322 286L334 280Q330 230 270 156M244 160Q280 240 326 284M322 286L320 300Q330 330 336 330M334 280L350 294L370 296L350 310L370 328M346 296L342 330M410 154Q414 186 460 194Q490 190 484 176Q470 150 456 154M414 168q20-14 40 0q30 0 32 16M398 166l4 14M410 164l4 16",
      "M426 332Q420 280 446 260Q480 258 496 330M436 286l4 14l12-8",
      "M566 24Q560 0 580 0M650 24Q654 10 640 0M100 0L112 22M60 0q4 14 14 6M16 646Q30 660 140 650M276 650V690M300 646V686M320 646V690M358 650V690M600 650Q640 690 660 660M160 690q20-20 34 0",
    ],
    dots: [[384, 226, 6]],
  },
  {
    x: 62.5,
    y: 370,
    paths: [
      // game controller
      "M554 478Q556 438 590 434L640 436Q682 442 680 480Q676 502 650 500L580 502Q554 500 554 478M594 250Q580 270 604 296Q644 326 646 350Q650 380 620 384Q596 380 600 358Q610 344 630 346Q664 360 654 396Q640 414 616 416L612 434M598 480h2M612 480h2",
      // fox
      "M720 300L704 310L706 290L722 258L726 200Q740 200 754 220L782 238L812 240L810 280Q850 340 910 370Q940 330 930 310Q950 280 1000 284M910 370Q960 380 1000 368M724 312Q760 380 830 404Q880 400 892 384L910 370M704 280Q684 260 690 240Q706 250 714 270M764 224Q754 200 770 198Q790 210 786 236M830 404Q870 450 906 452Q914 440 900 430L850 404M892 384L946 410Q956 400 940 390L912 380M750 300q10 40 20 8M790 260q20 40 20 0M800 330v2M830 350v2M780 350v2M822 310v2M740 270l8 6",
      "M812 522Q800 470 820 468Q850 460 866 474Q890 480 890 500L888 522M822 520V480M840 520V476M860 520L862 484M596 650Q640 720 704 650M960 470Q950 460 966 458L1010 430M966 458L984 470L1020 440M966 472Q970 490 984 484L984 470",
      "M862 160L868 176Q880 166 900 166Q930 200 914 230Q890 244 884 220Q890 210 900 226Q910 190 886 176M800 740Q790 700 824 690Q850 680 860 694Q900 670 918 710Q916 740 900 750M930 704Q940 680 966 686Q980 700 966 710Q940 714 930 704M500 750Q490 690 536 672Q580 680 572 740M520 700q8-20 26 0q0 30-14 40M410 740Q416 710 440 740M760 0Q780 60 800 30M820 20Q860 8 880 20",
    ],
    dots: [[678, 201, 5], [935, 271, 6], [524, 300, 5], [732, 435, 6], [577, 474, 12], [633, 474, 5], [646, 458, 5], [657, 476, 5], [646, 488, 5], [428, 662, 8], [786, 740, 6]],
  },
  {
    x: 250,
    y: 690,
    paths: [
      // whale with hat
      "M312 196Q270 230 280 270Q290 320 320 330M380 202Q450 230 462 280L484 290Q484 310 460 310Q440 300 400 326L380 330M322 156L312 200Q346 210 380 200L356 156M278 198Q270 210 300 214M378 196Q390 206 372 216M244 302Q250 290 280 296M244 302Q260 320 290 308M372 286Q410 290 432 276Q446 300 410 314Q380 320 376 308M446 156Q480 180 516 156",
      "M502 236Q506 212 540 206Q574 210 574 236Q570 274 538 272Q510 266 502 236M508 204L538 214L530 194M538 210l20-10M540 210Q570 240 564 264M528 206l-10-10",
      "M604 156Q608 190 634 216Q640 190 676 176L680 156M716 156L796 200Q806 196 802 186M720 164L788 202M554 326Q570 276 620 280Q650 290 656 292Q670 254 720 256Q760 270 756 296Q700 310 660 292M656 292Q700 290 720 326M656 310l-8 16M656 310l8 16",
      "M80 560Q140 620 220 600Q260 590 280 560M120 560Q140 600 186 606M190 560Q210 590 226 596M300 560l38 20l0-20M278 640q20-30 50-10l14 14",
    ],
    dots: [[377, 252, 8], [402, 257, 5], [705, 225, 5], [384, 170, 6], [294, 576, 5], [221, 218, 4]],
  },
  {
    x: 62.5,
    y: 640,
    paths: [
      // flying saucer, fish, candy
      "M498 194Q520 180 534 196Q580 240 618 262Q616 274 590 270Q520 256 498 194M498 206Q540 270 606 270M534 192Q540 160 580 160Q610 176 602 230Q560 230 534 192M540 262l-8 14M594 272l4 12M500 210l-8 14M530 206l6 10M560 236l8 8",
      "M670 176Q670 166 692 174L688 186Q700 210 690 222Q702 238 690 240Q672 238 676 228Q680 220 676 206Q670 196 676 188ZM676 196h18M676 212h18",
      "M816 238Q790 230 770 262L756 284Q770 290 770 300Q780 296 784 280Q820 268 816 238M796 244l8 8",
      // sea creature
      "M876 332Q890 290 904 276Q870 270 862 250Q866 240 884 238Q880 204 910 196Q950 196 956 236Q950 270 930 300L926 332M870 250Q900 270 932 252M910 230h2M926 226h2M960 386Q1010 386 1046 430M1000 340M664 332Q670 310 690 308L690 288Q710 280 710 296Q700 300 690 298M694 308Q706 320 704 332",
      "M960 150Q980 200 1050 180M850 160L950 20M950 90Q980 60 1000 90Q990 120 976 124",
    ],
    dots: [[565, 182, 7], [600, 322, 4], [946, 320, 6], [1044, 48, 6], [340, 116, 6]],
    stars: [[796, 184, 19]],
  },
];

function starPath(cx: number, cy: number, r: number) {
  const pts: string[] = [];
  for (let i = 0; i < 10; i++) {
    const a = -Math.PI / 2 + 0.08 + (i * Math.PI) / 5;
    const q = i % 2 ? r * 0.5 : r;
    pts.push(`${(cx + q * Math.cos(a)).toFixed(1)} ${(cy + q * Math.sin(a)).toFixed(1)}`);
  }
  return `M${pts.join("L")}Z`;
}

function spiralPath(cx: number, cy: number, r: number) {
  const pts: string[] = [];
  for (let i = 0; i <= 36; i++) {
    const a = i * 0.29;
    const q = r * (0.12 + (0.88 * i) / 36);
    pts.push(`${(cx + q * Math.cos(a)).toFixed(1)} ${(cy + q * Math.sin(a)).toFixed(1)}`);
  }
  return `M${pts.join("L")}`;
}

function heartPath(x: number, y: number, r: number) {
  return `M${x - r * 0.1} ${y + r * 0.85}Q${x - r * 1.1} ${y + r * 0.2} ${x - r} ${y - r * 0.35}Q${x - r * 0.4} ${y - r} ${x - r * 0.1} ${y - r * 0.3}Q${x + r * 0.4} ${y - r * 1.1} ${x + r * 0.9} ${y - r * 0.5}Q${x + r * 1.1} ${y + r * 0.3} ${x - r * 0.1} ${y + r * 0.85}Z`;
}

function Wallpaper() {
  return (
    <svg className="absolute inset-0 h-full w-full" viewBox="0 0 1241 907" aria-hidden="true">
      <defs>
        <linearGradient id="hue" x1="0" y1="0" x2="1" y2="0">
          <stop offset="0" stopColor="#1f1b3a" />
          <stop offset="0.3" stopColor="#251a38" />
          <stop offset="0.6" stopColor="#301a35" />
          <stop offset="1" stopColor="#351934" />
        </linearGradient>
        <linearGradient id="warm" x1="0" y1="0" x2="0" y2="1">
          <stop offset="0" stopColor="#3d332f" stopOpacity="0.7" />
          <stop offset="0.4" stopColor="#3d332f" stopOpacity="0" />
        </linearGradient>
        <g id="tile">
          {sheets.map((s, i) => (
            <g key={i} transform={`translate(${s.x} ${s.y}) scale(0.33333)`}>
              {s.paths.map((d, j) => (
                <path key={j} d={d} />
              ))}
              {s.dots?.map(([x, y, r], j) => <circle key={j} cx={x} cy={y} r={r} />)}
              {s.stars?.map(([x, y, r], j) => <path key={j} d={starPath(x, y, r)} />)}
              {s.spirals?.map(([x, y, r], j) => <path key={j} d={spiralPath(x, y, r)} />)}
              {s.hearts?.map(([x, y, r], j) => <path key={j} d={heartPath(x, y, r)} />)}
            </g>
          ))}
        </g>
        <mask id="lines" maskUnits="userSpaceOnUse" x="0" y="0" width="1241" height="907">
          <g fill="none" stroke="#fff" strokeWidth="3.4" strokeLinecap="round" strokeLinejoin="round">
            <use href="#tile" />
            <use href="#tile" x="-527.5" />
            <use href="#tile" x="527.5" />
            <use href="#tile" x="1055" />
          </g>
        </mask>
      </defs>
      <g mask="url(#lines)">
        <rect width="1241" height="907" fill="url(#hue)" />
        <rect width="1241" height="907" fill="url(#warm)" />
      </g>
    </svg>
  );
}

/* ---------- chat ---------- */

function Tail({ side, className }: { side: "left" | "right"; className: string }) {
  return (
    <svg
      className={`absolute bottom-0 h-[24px] w-[9.5px] ${side === "right" ? "left-full" : "right-full -scale-x-100"} ${className}`}
      viewBox="0 0 7 17"
      preserveAspectRatio="none"
      fill="currentColor"
    >
      <path d="M6.2 17H0V0c.193 2.84.876 5.767 2.05 8.782.904 2.325 2.446 4.485 4.625 6.48A1 1 0 016.2 17z" />
    </svg>
  );
}

function Ticks() {
  return (
    <svg className="mb-[7px] h-[15px] w-[26px]" viewBox="0 0 26 15" fill="none" stroke="#fff" strokeWidth="2.5" strokeLinecap="round" strokeLinejoin="round">
      <path d="M3.4 7.8L8 12.2L17 2M12.9 10.6L14.6 12.2L24.4 2" />
    </svg>
  );
}

function Sent({ width, time, children }: { width: string; time: string; children: ReactNode }) {
  return (
    <div className={`relative flex h-[43px] items-start justify-between self-end rounded-[21.5px] rounded-br-none bg-[#8774e1] pr-[10px] pl-[11.6px] text-white ${width}`}>
      <span className="pt-[6.5px] whitespace-nowrap">{children}</span>
      <span className="flex h-full items-end text-[17px] leading-[20px] text-white/60">
        <span className="mb-[5.2px]">{time}</span>
        <Ticks />
      </span>
      <Tail side="right" className="text-[#8774e1]" />
    </div>
  );
}

function Received({ width, time, height = "h-[43px]", pad = "pt-[6.7px]", children }: { width: string; time: string; height?: string; pad?: string; children: ReactNode }) {
  return (
    <div className={`relative flex items-start justify-between self-start rounded-[21.5px] rounded-bl-none bg-[#212121] px-[12px] text-white ${height} ${width}`}>
      <div className={`flex items-start whitespace-pre ${pad}`}>{children}</div>
      <span className="self-end pb-[5px] text-[17px] leading-[20px] text-[#a0a0a0]">{time}</span>
      <Tail side="left" className="text-[#212121]" />
    </div>
  );
}

function CheckEmoji() {
  return (
    <svg className="mt-[3px] mr-[5.5px] h-[26px] w-[26px]" viewBox="0 0 26 26">
      <defs>
        <linearGradient id="green" x1="0" y1="0" x2="0" y2="1">
          <stop offset="0" stopColor="#5ddf62" />
          <stop offset="0.16" stopColor="#08b808" />
          <stop offset="0.8" stopColor="#00c400" />
          <stop offset="1" stopColor="#039a0c" />
        </linearGradient>
      </defs>
      <rect width="26" height="26" rx="4.5" fill="url(#green)" />
      <path d="M5 13.8L7.4 12.4Q9.2 14.6 10.3 17.4Q14 9.4 19.4 4.8L21.4 5.2Q14.6 12.6 11.5 21.4L9.2 21.4Q7.8 17.4 5 13.8Z" fill="#fff" />
    </svg>
  );
}

function ChartEmoji() {
  return (
    <svg className="mt-[3px] mr-[6.2px] ml-[1px] h-[26px] w-[24px]" viewBox="0 0 24 26">
      <defs>
        <linearGradient id="paper" x1="0" y1="0" x2="0" y2="1">
          <stop offset="0" stopColor="#dce6ec" />
          <stop offset="1" stopColor="#c3ccd4" />
        </linearGradient>
      </defs>
      <rect x="0.5" width="22.8" height="26" fill="url(#paper)" />
      <path d="M4.5 0V26M8.5 0V26M12.5 0V26M16.5 0V26M20.5 0V26M0.5 4H23.3M0.5 8H23.3M0.5 12H23.3M0.5 16H23.3M0.5 20H23.3" stroke="#b2cbd8" strokeWidth="0.5" />
      <path d="M1.5 23.5L6.5 16.5L13.5 18.3L17.5 12.5L22.2 2" fill="none" stroke="#d5141c" strokeWidth="1.6" strokeLinejoin="round" />
      <path d="M0.5 0V25.5H23.3" fill="none" stroke="#8d979e" strokeWidth="0.8" />
    </svg>
  );
}

export default function App() {
  return (
    <div className="relative flex h-[907px] w-[1241px] flex-col overflow-hidden border-l-2 border-[#212121] bg-black font-['Roboto',sans-serif] text-[23px] leading-[30.6px]">
      <div className="absolute inset-y-0 right-0 -left-[2px]">
        <Wallpaper />
      </div>
      <header className="relative z-10 ml-px flex h-[74px] shrink-0 items-start bg-[#212121] pl-[26px]">
        <div className="mt-[3px] flex h-[60px] w-[60px] items-center justify-center rounded-full bg-linear-to-b from-[#b694f9] to-[#6c61df] text-[22px] font-medium text-white">C</div>
        <div className="ml-[26px] flex flex-col pt-[5px]">
          <span className="text-[23.1px] leading-[32px] font-medium text-white">CCprediction_bot</span>
          <span className="text-[20px] leading-[22px] text-[#aaaaaa]">bot</span>
        </div>
        <svg className="mt-[18px] ml-auto h-[30px] w-[30px]" viewBox="0 0 30 30" fill="none" stroke="#aaaaaa" strokeWidth="2.9" strokeLinecap="round">
          <circle cx="11.5" cy="11.7" r="9.2" />
          <path d="M18.3 18.5L26.2 26.2" />
        </svg>
        <svg className="mt-[18px] mr-[24px] ml-[38px] h-[30px] w-[30px]" viewBox="0 0 30 30" fill="#aaaaaa">
          <circle cx="15.5" cy="5.8" r="3.2" />
          <circle cx="15.5" cy="14.5" r="3.2" />
          <circle cx="15.5" cy="23.2" r="3.2" />
        </svg>
      </header>

      <main className="relative -mt-[5px] ml-[250px] flex w-[662px] flex-col gap-[8.8px]">
        <Sent width="w-[277px]" time="14:48">/addcost 500 ec2</Sent>
        <Received width="w-[305px]" pad="pt-[7px]" time="14:48"><CheckEmoji />Added ₹500.0 (ec2)</Received>
        <Sent width="w-[282px]" time="14:48">/addusage ec2 20</Sent>
        <Received width="w-[344px]" time="14:48"><CheckEmoji />{"Usage added: ec2 "}<span className="text-[20px]">→</span>{" 20"}</Received>
        <Sent width="w-[177px]" time="14:48">/predict</Sent>
        <Received width="w-[489px]" time="14:49"><ChartEmoji />Prediction: ₹5208.0 (avg daily ₹620.0)</Received>
        <Sent width="w-[176px]" time="14:49">/history</Sent>
        <Received width="w-[333px]" height="h-[103.6px]" pad="pt-[6px]" time="14:49">{"Last entries:\n2025-10-30: ₹500.0 (ec2)\n2025-10-30: ₹120.0 (EC2)"}</Received>
        <Sent width="w-[190px]" time="15:12">/addcost</Sent>
        <Received width="w-[441px]" time="15:13">{"Usage: "}<span className="text-[#8774e1]">/addcost</span>{" <amount> [service]"}</Received>
        <Sent width="w-[190px]" time="15:13">/addcost</Sent>
        <Received width="w-[441px]" time="15:13">{"Usage: "}<span className="text-[#8774e1]">/addcost</span>{" <amount> [service]"}</Received>
        <Sent width="w-[277px]" time="15:13"><span className="underline decoration-2 underline-offset-[3px]">/addcost</span> 500 ec2</Sent>
      </main>

      <footer className="relative mt-[6px] ml-[250px] flex items-end gap-[12px]">
        <div className="relative flex h-[77px] w-[662px] items-center rounded-[22px] rounded-br-none bg-[#212121] pl-[18px]">
          <button className="flex h-[43px] w-[54px] items-center justify-center rounded-full bg-[#8774e1]">
            <svg className="h-[18px] w-[24px]" viewBox="0 0 24 18" stroke="#fff" strokeWidth="2.4" strokeLinecap="round">
              <path d="M1.5 1.6H22.5M1.5 8.4H22.5M1.5 15.2H22.5" />
            </svg>
          </button>
          <svg className="-mt-px ml-[20px] h-[34px] w-[34px]" viewBox="0 0 34 34" fill="none" stroke="#aaaaaa" strokeWidth="2.8" strokeLinecap="round">
            <circle cx="16.6" cy="16.4" r="14.7" />
            <path d="M9.8 19.9Q16.6 26.9 23.4 19.9" />
            <ellipse cx="12" cy="12.7" rx="1.9" ry="2.4" fill="#aaaaaa" stroke="none" />
            <ellipse cx="21.2" cy="12.7" rx="1.9" ry="2.4" fill="#aaaaaa" stroke="none" />
          </svg>
          <span className="mt-[2px] ml-[22.5px] text-[#98a2ab]">Message</span>
          <svg className="mr-[23px] mb-[2px] ml-auto h-[32px] w-[30px]" viewBox="0 0 30 32" fill="none" stroke="#aaaaaa" strokeWidth="2.8" strokeLinecap="round" strokeLinejoin="round">
            <path d="M26 20.5L19.5 26.7C15.8 30.6 10.4 31.6 6.6 28.6C2.2 25 2.2 18.9 6 15L16 4.9C19 1.9 23.3 1.6 26 4.2C28.6 6.8 28.2 10.7 25.4 13.6L15.8 23.4C13.8 25.4 11.2 25.4 9.8 23.7C8.4 22 8.7 19.9 10.3 18.2L17.2 11.2" />
          </svg>
          <Tail side="right" className="text-[#212121]" />
        </div>
        <div className="relative h-[77px] w-[77px]">
          <button className="absolute bottom-[92px] left-0 flex h-[77px] w-[77px] items-center justify-center rounded-full bg-[#212121]">
            <svg className="-mt-[2px] h-[26px] w-[26px]" viewBox="0 0 26 26" fill="none" stroke="#aaaaaa" strokeWidth="2.9" strokeLinecap="round" strokeLinejoin="round">
              <path d="M13 2.6V23M2.9 13.2L13 23.3L23.1 13.2" />
            </svg>
          </button>
          <button className="flex h-[77px] w-[77px] items-center justify-center rounded-full bg-[#8774e1]">
            <svg className="-mt-px h-[31px] w-[26px]" viewBox="0 0 26 31">
              <rect x="6.4" y="0.4" width="12.8" height="19.4" rx="6" fill="#fff" />
              <path d="M1.9 14.2C2.6 20.4 7 24 12.8 24C18.8 24 23.2 20.4 23.9 14.2M12.8 24V29" fill="none" stroke="#fff" strokeWidth="3" strokeLinecap="round" />
            </svg>
          </button>
        </div>
      </footer>
      <div className="relative mt-auto h-px w-full shrink-0 bg-[#29231e]" />
    </div>
  );
}
